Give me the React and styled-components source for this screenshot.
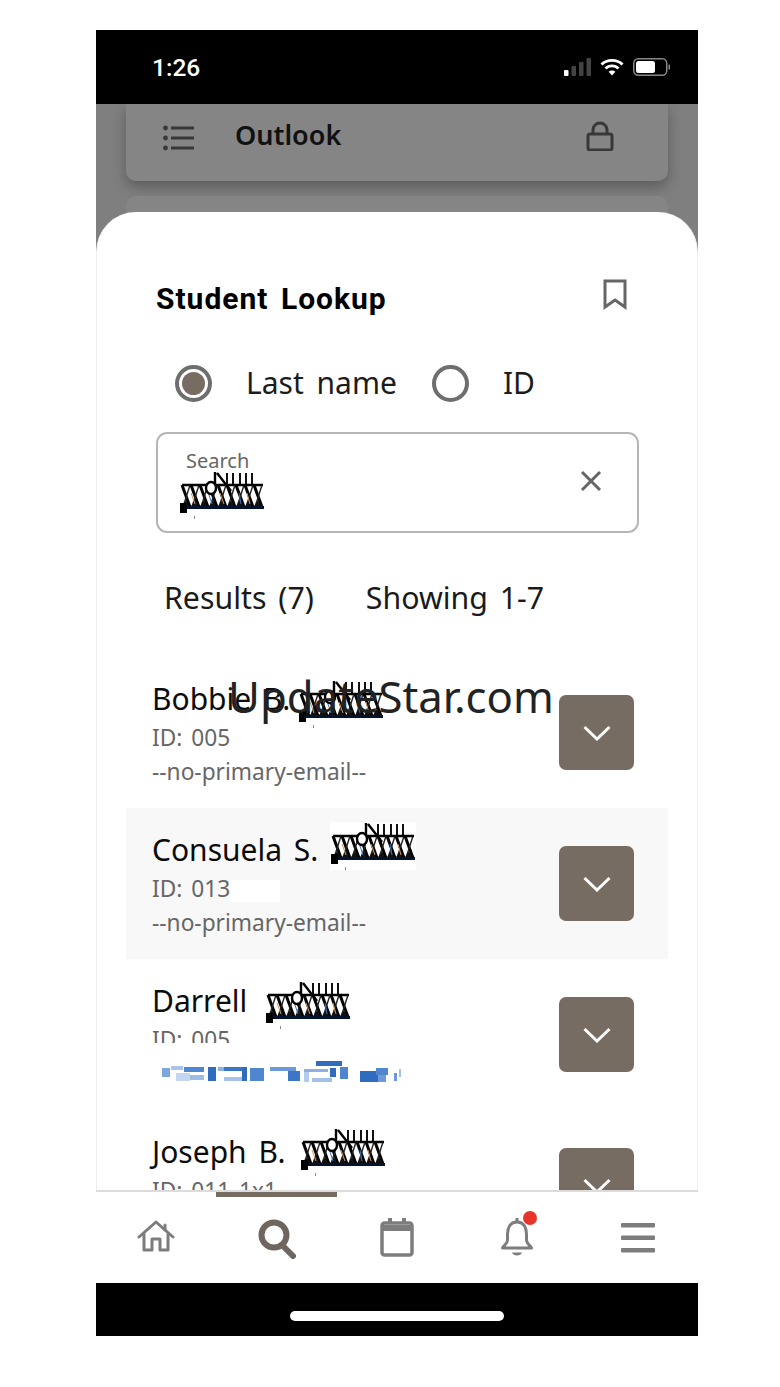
import React from 'react';
import styled, { createGlobalStyle } from 'styled-components';

const GlobalStyle = createGlobalStyle`
  html, body {
    margin: 0;
    padding: 0;
    background: #fff;
    font-family: "Noto Sans", "Open Sans", sans-serif;
  }
`;

const Page = styled.div`
  width: 780px;
  height: 1387px;
  box-sizing: border-box;
  padding: 30px 82px 0 96px;
  overflow: hidden;
`;

const Phone = styled.div`
  width: 602px;
  height: 1306px;
  display: flex;
  flex-direction: column;
`;

const StatusBar = styled.div`
  height: 74px;
  flex: none;
  background: #000;
  display: flex;
  align-items: center;
  justify-content: space-between;
  padding: 0 28px 0 56px;
  box-sizing: border-box;
`;

const Clock = styled.span`
  font-family: Roboto, sans-serif;
  font-weight: 500;
  font-size: 24.5px;
  color: #fff;
`;

const StatusIcons = styled.div`
  display: flex;
  align-items: center;
  gap: 9px;
`;

const Screen = styled.div`
  position: relative;
  flex: 1;
  min-height: 0;
  overflow: hidden;
  background: #7f7f7f;
  padding: 0 30px;
`;

const BackCard = styled.div`
  height: 77px;
  box-sizing: border-box;
  background: #858585;
  border-radius: 0 0 10px 10px;
  box-shadow: 0 6px 14px rgba(0, 0, 0, 0.28);
  display: flex;
  align-items: center;
  padding: 0 54px 14px 37px;
  margin-bottom: 15px;
`;

const BackCardIcon = styled.div`
  display: flex;
  margin-right: 40px;
  margin-top: 4px;
`;

const BackCardTitle = styled.span`
  flex: 1;
  font-size: 27px;
  font-weight: 600;
  color: #111;
  position: relative;
  top: -1px;
`;

const GhostCard = styled.div`
  height: 60px;
  background: #858585;
  border-radius: 10px 10px 0 0;
`;

const Sheet = styled.div`
  position: absolute;
  top: 108px;
  left: 0;
  right: 0;
  bottom: 0;
  background: #fff;
  border-radius: 40px 40px 0 0;
  border: solid #eee;
  border-width: 0 1px;
  overflow: hidden;
`;

const SheetHeader = styled.div`
  display: flex;
  justify-content: space-between;
  align-items: flex-start;
  padding: 68px 70px 0 59px;
`;

const Title = styled.h2`
  margin: 0;
  font-family: Roboto, sans-serif;
  font-weight: 700;
  font-size: 30px;
  line-height: 38px;
  letter-spacing: 1px;
  word-spacing: 4px;
  color: #000;
`;

const BookmarkWrap = styled.div`
  display: flex;
  margin-top: -1px;
`;

const RadioRow = styled.div`
  display: flex;
  align-items: center;
  height: 38px;
  margin: 46px 0 0 78px;
`;

const RadioCircle = styled.span`
  width: 37px;
  height: 37px;
  box-sizing: border-box;
  border: 4px solid #6e6e6e;
  border-radius: 50%;
  display: flex;
  align-items: center;
  justify-content: center;
  flex: none;

  &::after {
    content: '';
    width: 23px;
    height: 23px;
    border-radius: 50%;
    background: ${props => (props.$checked ? '#776c61' : 'transparent')};
  }
`;

const RadioLabel = styled.span`
  font-size: 30px;
  line-height: 38px;
  word-spacing: 5px;
  color: #1c1c1c;
  margin: 0 35px 0 34px;
`;

const SearchBox = styled.div`
  display: flex;
  height: 101px;
  box-sizing: border-box;
  align-items: flex-start;
  justify-content: space-between;
  margin: 30px 58px 0 59px;
  border: 2px solid #b6b6b6;
  border-radius: 11px;
  position: relative;
  padding: 13px 35px 0 21px;
`;

const SearchField = styled.div`
  display: flex;
  flex-direction: column;
`;

const SearchLabel = styled.span`
  font-size: 20px;
  line-height: 28px;
  color: #666;
  margin-left: 7px;
`;

const ScribbleInField = styled.div`
  margin-top: -4px;
  display: flex;
`;

const ClearButton = styled.div`
  display: flex;
  margin-top: 23px;
`;

const ResultsBar = styled.div`
  display: flex;
  gap: 52px;
  height: 40px;
  align-items: center;
  margin: 44px 0 0 67px;
  font-size: 30.3px;
  word-spacing: 4px;
  color: #1a1a1a;
`;

const List = styled.div`
  margin: 40px 29px 0 29px;
`;

const Row = styled.div`
  height: 151px;
  box-sizing: border-box;
  display: flex;
  justify-content: space-between;
  align-items: center;
  padding: 0 34px 0 26px;
  background: ${props => (props.$shaded ? '#f8f8f8' : 'transparent')};
`;

const RowInfo = styled.div`
  align-self: flex-start;
  padding-top: 22px;
  min-width: 0;
`;

const NameLine = styled.div`
  display: flex;
  align-items: center;
  height: 38px;
  margin-bottom: 4px;
  font-size: 30px;
  word-spacing: 4px;
  color: #0c0c0c;
`;

const NameScribble = styled.div`
  align-self: flex-start;
  margin-left: ${props => props.$gap}px;
  margin-top: ${props => props.$drop}px;
  display: flex;
  background: ${props => (props.$patch ? '#fff' : 'transparent')};
`;

const Meta = styled.div`
  font-size: 22.7px;
  line-height: 34px;
  height: ${props => props.$clip ? `${props.$clip}px` : '34px'};
  overflow: hidden;
  word-spacing: 3px;
  color: #666;
`;

const IdPatch = styled.span`
  display: inline-block;
  width: 50px;
  height: 22px;
  background: #fff;
  vertical-align: middle;
`;

const SmudgeLine = styled.div`
  display: flex;
  margin: 18px 0 0 10px;
`;

const ExpandButton = styled.div`
  width: 75px;
  height: 75px;
  flex: none;
  background: #776c61;
  border-radius: 7px;
  display: flex;
  align-items: center;
  justify-content: center;
`;

const Watermark = styled.div`
  position: absolute;
  top: 455px;
  left: 131px;
  font-size: 43.7px;
  line-height: 58px;
  color: #222;
  white-space: nowrap;
  pointer-events: none;
`;

const BottomNav = styled.nav`
  position: relative;
  height: 93px;
  flex: none;
  box-sizing: border-box;
  background: #fff;
  border-top: 2px solid #dcdcdc;
  display: grid;
  grid-template-columns: repeat(5, 1fr);
`;

const NavItem = styled.div`
  display: flex;
  justify-content: center;
  align-items: flex-start;
  padding-top: 28px;
  position: relative;
`;

const ActiveBar = styled.div`
  position: absolute;
  top: 0;
  left: 0;
  right: 0;
  height: 5px;
  background: #776c61;
`;

const Dot = styled.span`
  position: absolute;
  top: 19px;
  left: 66px;
  width: 14px;
  height: 14px;
  border-radius: 50%;
  background: #e8352a;
`;

const HomeBar = styled.div`
  height: 53px;
  flex: none;
  background: #000;
  display: flex;
  justify-content: center;
  padding-top: 28px;
  box-sizing: border-box;
`;

const HomePill = styled.div`
  width: 214px;
  height: 10px;
  border-radius: 5px;
  background: #fff;
`;

// the garbled run the source shows over redacted names: a plain drawing, no letters
const Scribble = () => {
  const crosses = [0, 9, 18, 27, 36, 45, 54, 63, 72];
  return (
    <svg width="86" height="48" viewBox="0 0 86 48">
      {[48, 54, 61, 67, 73].map(x => (
        <line key={x} x1={x} y1="2" x2={x} y2="15" stroke="#111" strokeWidth="2" />
      ))}
      <path d="M36 1 V14 M38 2 L52 20" stroke="#000" strokeWidth="2.4" fill="none" />
      <path d="M3 14 H84" stroke="#000" strokeWidth="2.6" />
      {crosses.map(x => (
        <g key={x}>
          <path d={`M${x + 3} 14 L${x + 11} 36`} stroke="#000" strokeWidth="3" />
          <path d={`M${x + 11} 14 L${x + 4} 36`} stroke="#222" strokeWidth="1.4" />
          <path d={`M${x + 2} 37 L${x + 7} 29 L${x + 11} 37 Z`} fill="#111" />
        </g>
      ))}
      <path d="M12 22 L16 33 M41 22 L45 33 M68 22 L71 33" stroke="#d29a5c" strokeWidth="1" />
      <path d="M60 22 L62 33 M30 24 L33 33" stroke="#3a78c8" strokeWidth="1" />
      <path d="M27 17 a5 6 0 1 0 10 0 a5 6 0 1 0 -10 0" fill="#fff" stroke="#000" strokeWidth="2.4" />
      <path d="M5 36.5 H85" stroke="#03122e" strokeWidth="3" />
      <rect x="1" y="32" width="7" height="10" fill="#000" />
      <rect x="15" y="45" width="1" height="3" fill="#888" />
    </svg>
  );
};

const smudge = [
  [0, 7, 8, 9, '#7ea6dd'], [9, 5, 12, 4, '#a9c4ea'], [14, 12, 14, 8, '#c4d6f0'],
  [22, 6, 20, 5, '#4f86cf'], [28, 14, 14, 5, '#9dbce6'], [46, 6, 8, 14, '#2f6cc0'],
  [56, 6, 12, 4, '#8db0e2'], [62, 6, 22, 4, '#3c76c6'], [62, 16, 20, 4, '#a6c2e8'],
  [80, 6, 5, 14, '#2f6cc0'], [88, 7, 14, 13, '#4f86cf'], [108, 6, 26, 4, '#6c9ad8'],
  [126, 10, 12, 10, '#3c76c6'], [142, 8, 24, 3, '#8db0e2'], [142, 11, 5, 10, '#b3cbec'],
  [150, 17, 20, 4, '#a3c0e8'], [154, 0, 26, 5, '#2f6cc0'], [168, 7, 6, 9, '#2f6cc0'],
  [178, 6, 8, 12, '#4f86cf'], [198, 10, 18, 11, '#2f6cc0'], [214, 7, 12, 7, '#4f86cf'],
  [216, 14, 8, 7, '#6c9ad8'], [232, 12, 3, 8, '#6c9ad8'], [237, 8, 2, 8, '#a3c0e8'],
];

const EmailSmudge = () => (
  <svg width="240" height="24" viewBox="0 0 240 24">
    {smudge.map(([x, y, w, h, fill]) => (
      <rect key={`${x}-${y}`} x={x} y={y} width={w} height={h} fill={fill} />
    ))}
  </svg>
);

const Chevron = () => (
  <svg width="28" height="16" viewBox="0 0 28 16" fill="none">
    <path d="M1.5 2 L14 14 L26.5 2" stroke="#fff" strokeWidth="3" />
  </svg>
);

const StudentRow = ({ name, gap, drop, patch, shaded, children }) => (
  <Row $shaded={shaded}>
    <RowInfo>
      <NameLine>
        {name}
        <NameScribble $gap={gap} $drop={drop} $patch={patch}><Scribble /></NameScribble>
      </NameLine>
      {children}
    </RowInfo>
    <ExpandButton><Chevron /></ExpandButton>
  </Row>
);

const App = () => (
  <Page>
    <GlobalStyle />
    <Phone>
      <StatusBar>
        <Clock>1:26</Clock>
        <StatusIcons>
          <svg width="27" height="18" viewBox="0 0 27 18">
            <rect x="0" y="12" width="4.5" height="6" rx="1" fill="#fff" />
            <rect x="7.5" y="8" width="4.5" height="10" rx="1" fill="#444" />
            <rect x="15" y="4" width="4.5" height="14" rx="1" fill="#444" />
            <rect x="22.5" y="0" width="4.5" height="18" rx="1" fill="#444" />
          </svg>
          <svg width="24" height="18" viewBox="0 0 24 18" fill="none" stroke="#fff" strokeWidth="2.8">
            <path d="M1.5 6.5 C7 1 17 1 22.5 6.5" />
            <path d="M5.5 10.5 C9 7 15 7 18.5 10.5" />
            <path d="M12 17.5 L8.6 13.8 C10.5 12 13.5 12 15.4 13.8 Z" fill="#fff" stroke="none" />
          </svg>
          <svg width="37" height="18" viewBox="0 0 37 18" fill="none">
            <rect x="0.75" y="0.75" width="33" height="16.5" rx="4.5" stroke="#888" strokeWidth="1.5" />
            <rect x="3" y="3" width="19" height="12" rx="2.5" fill="#fff" />
            <path d="M35.5 6.5 a2.5 2.5 0 0 1 0 5 Z" fill="#888" />
          </svg>
        </StatusIcons>
      </StatusBar>

      <Screen>
        <BackCard>
          <BackCardIcon>
            <svg width="32" height="26" viewBox="0 0 32 26" fill="none" stroke="#383838" strokeWidth="3">
              <path d="M8 3 H31 M8 13 H31 M8 23 H31" />
              <circle cx="2.5" cy="3" r="2.4" fill="#383838" stroke="none" />
              <circle cx="2.5" cy="13" r="2.4" fill="#383838" stroke="none" />
              <circle cx="2.5" cy="23" r="2.4" fill="#383838" stroke="none" />
            </svg>
          </BackCardIcon>
          <BackCardTitle>Outlook</BackCardTitle>
          <svg width="28" height="30" viewBox="0 0 28 30" fill="none" stroke="#383838" strokeWidth="3">
            <rect x="2" y="13" width="24" height="16" rx="2" />
            <path d="M7 13 V9 a7 7 0 0 1 14 0 V13" />
          </svg>
        </BackCard>
        <GhostCard />

        <Sheet>
          <SheetHeader>
            <Title>Student Lookup</Title>
            <BookmarkWrap>
              <svg width="24" height="31" viewBox="0 0 24 31" fill="none" stroke="#666" strokeWidth="3">
                <path d="M2 2 H22 V28 L12 21 L2 28 Z" />
              </svg>
            </BookmarkWrap>
          </SheetHeader>

          <RadioRow>
            <RadioCircle $checked />
            <RadioLabel>Last name</RadioLabel>
            <RadioCircle />
            <RadioLabel>ID</RadioLabel>
          </RadioRow>

          <SearchBox>
            <SearchField>
              <SearchLabel>Search</SearchLabel>
              <ScribbleInField><Scribble /></ScribbleInField>
            </SearchField>
            <ClearButton>
              <svg width="22" height="22" viewBox="0 0 22 22" fill="none" stroke="#666" strokeWidth="3">
                <path d="M2 2 L20 20 M20 2 L2 20" />
              </svg>
            </ClearButton>
          </SearchBox>

          <ResultsBar>
            <span>Results (7)</span>
            <span>Showing 1-7</span>
          </ResultsBar>

          <List>
            <StudentRow name="Bobbie B." gap={8} drop={1}>
              <Meta>ID: 005</Meta>
              <Meta>--no-primary-email--</Meta>
            </StudentRow>
            <StudentRow name="Consuela S." gap={12} drop={-8} patch shaded>
              <Meta>ID: 013<IdPatch /></Meta>
              <Meta>--no-primary-email--</Meta>
            </StudentRow>
            <StudentRow name="Darrell" gap={18} drop={0}>
              <Meta $clip={20}>ID: 005</Meta>
              <SmudgeLine><EmailSmudge /></SmudgeLine>
            </StudentRow>
            <StudentRow name="Joseph B." gap={14} drop={-4}>
              <Meta>ID: 011 1x1</Meta>
            </StudentRow>
          </List>

          <Watermark>UpdateStar.com</Watermark>
        </Sheet>
      </Screen>

      <BottomNav>
        <NavItem>
          <svg width="38" height="32" viewBox="0 0 38 32" fill="none" stroke="#7d7d7d" strokeWidth="3" strokeLinejoin="round" strokeLinecap="round">
            <path d="M2 17 L19 2 L36 17" />
            <path d="M28 5 V10" />
            <path d="M7 14 V30 H15 V19 H23 V30 H31 V14" />
          </svg>
        </NavItem>
        <NavItem>
          <ActiveBar />
          <svg width="38" height="40" viewBox="0 0 38 40" fill="none" stroke="#6f675f" style={{ marginTop: '-1px' }}>
            <circle cx="16" cy="16" r="12.5" strokeWidth="6" />
            <path d="M25 27 L35 37" strokeWidth="6" strokeLinecap="round" />
          </svg>
        </NavItem>
        <NavItem>
          <svg width="34" height="40" viewBox="0 0 34 40" fill="none" stroke="#7d7d7d" style={{ marginTop: '-3px' }}>
            <rect x="2" y="6" width="30" height="32" rx="2.5" strokeWidth="3.5" />
            <path d="M2 9 H32 V13 H2 Z" fill="#7d7d7d" strokeWidth="2" />
            <path d="M10 1 V7 M24 1 V7" strokeWidth="4" />
          </svg>
        </NavItem>
        <NavItem>
          <svg width="34" height="40" viewBox="0 0 34 40" fill="none" stroke="#7d7d7d" strokeWidth="3" strokeLinejoin="round" style={{ marginTop: '-3px' }}>
            <path d="M17 5 C10 5 7.5 11 7.5 17 V23 C7.5 27 4 28 2.5 31 H31.5 C30 28 26.5 27 26.5 23 V17 C26.5 11 24 5 17 5 Z" />
            <path d="M17 1 V5" />
            <path d="M12 35.5 H22 C21 39.5 13 39.5 12 35.5 Z" fill="#7d7d7d" stroke="none" />
          </svg>
          <Dot />
        </NavItem>
        <NavItem>
          <svg width="34" height="30" viewBox="0 0 34 30" fill="#7d7d7d" style={{ marginTop: '3px' }}>
            <rect x="0" y="0" width="34" height="4.5" rx="1" />
            <rect x="0" y="12.5" width="34" height="4.5" rx="1" />
            <rect x="0" y="25" width="34" height="4.5" rx="1" />
          </svg>
        </NavItem>
      </BottomNav>

      <HomeBar><HomePill /></HomeBar>
    </Phone>
  </Page>
);

export default App;
